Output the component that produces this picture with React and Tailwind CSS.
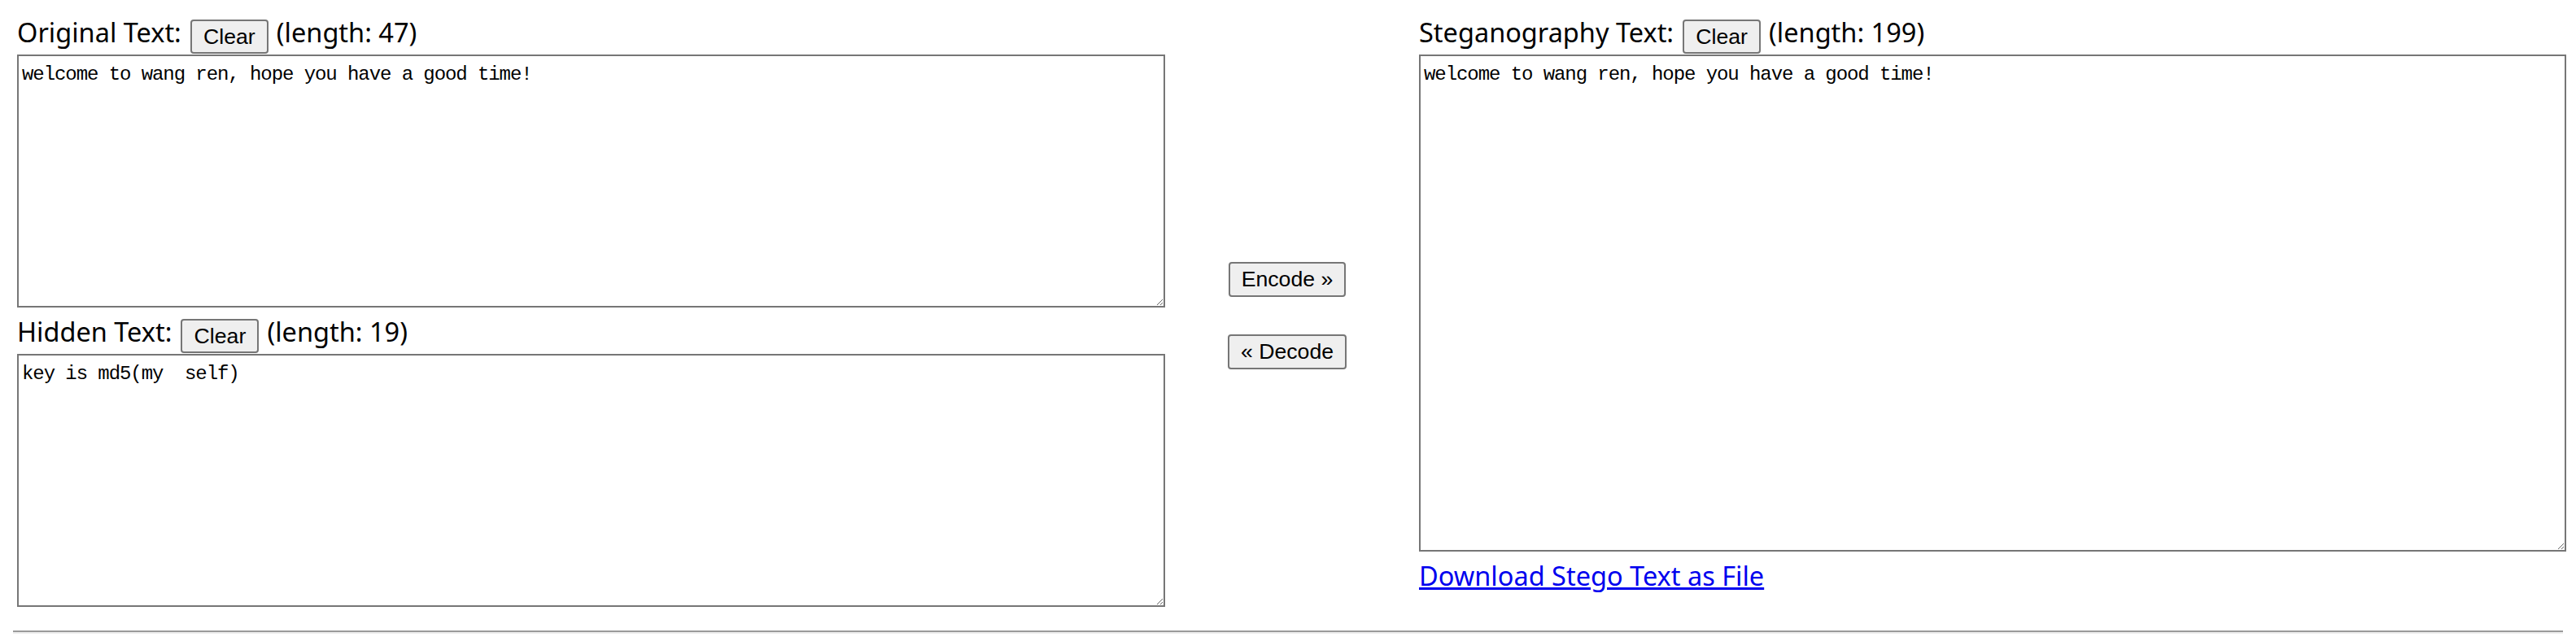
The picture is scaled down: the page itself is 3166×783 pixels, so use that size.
import { useState } from 'react';

const ORIGINAL = 'welcome to wang ren, hope you have a good time!';
const HIDDEN = 'key is md5(my  self)';

const btn =
  "h-[42px] rounded-[4px] border-2 border-[#767676] bg-[#efefef] font-['Liberation_Sans',Arial,sans-serif] text-[26.67px] leading-none text-black";

const area =
  "block resize-y border-2 border-[#767676] bg-white px-[4px] pt-[8px] font-['Liberation_Mono',monospace] text-[24px] leading-[30px] tracking-[-1.07px] text-black outline-none";

const LabelRow = ({ label, length, onClear }) => (
  <div className="flex items-start whitespace-nowrap">
    <span className="text-[32.5px] leading-[40px]">{label}</span>
    <button onClick={onClear} className={`${btn} ml-[11px] mt-[4px] w-[96px]`}>
      Clear
    </button>
    <span className="ml-[10px] text-[32.5px] leading-[40px]">(length: {length})</span>
  </div>
);

export default function App() {
  const [original, setOriginal] = useState(ORIGINAL);
  const [hidden, setHidden] = useState(HIDDEN);
  const [stego, setStego] = useState(ORIGINAL);

  return (
    <div className="min-h-[783px] bg-white pt-[20px] font-['Noto_Sans',sans-serif] text-black">
      <div className="flex items-center pl-[21px]">
        {/* left: original + hidden */}
        <div className="flex w-[1411px] flex-col pb-[10px]">
          <LabelRow label="Original Text:" length={47} onClear={() => setOriginal('')} />
          <textarea
            value={original}
            onChange={(e) => setOriginal(e.target.value)}
            className={`${area} mt-px h-[311px] w-[1411px]`}
          />
          <div className="mt-[10px]">
            <LabelRow label="Hidden Text:" length={19} onClear={() => setHidden('')} />
          </div>
          <textarea
            value={hidden}
            onChange={(e) => setHidden(e.target.value)}
            className={`${area} mt-px h-[311px] w-[1411px]`}
          />
        </div>

        {/* middle: actions */}
        <div className="flex w-[300px] flex-col items-center gap-[46px]">
          <button className={`${btn} h-[43px] w-[144px]`}>Encode »</button>
          <button className={`${btn} h-[43px] w-[146px]`}>« Decode</button>
        </div>

        {/* right: stego */}
        <div className="ml-[12px] flex w-[1410px] flex-col self-start">
          <LabelRow label="Steganography Text:" length={199} onClear={() => setStego('')} />
          <textarea
            value={stego}
            onChange={(e) => setStego(e.target.value)}
            className={`${area} mt-px h-[611px] w-[1410px]`}
          />
          <div className="mt-[10px]">
            <a href="#" className="text-[32.5px] leading-[40px] text-[#0000ee] underline">
              Download Stego Text as File
            </a>
          </div>
        </div>
      </div>

      <hr className="mx-[16px] mt-[19px] h-0 border-x-0 border-t-2 border-b-2 border-t-[#9a9a9a] border-b-[#eeeeee]" />
    </div>
  );
}
